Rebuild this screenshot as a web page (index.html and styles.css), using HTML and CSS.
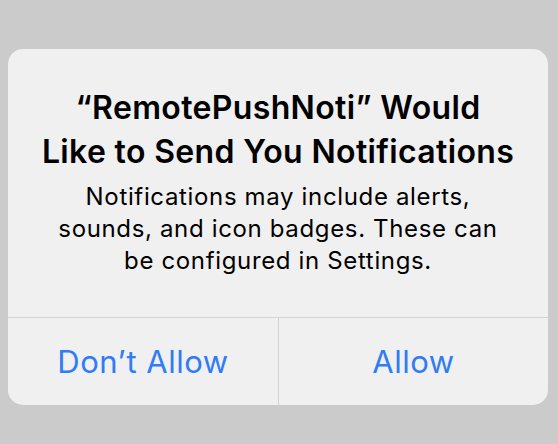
FILE: index.html
```html
<!DOCTYPE html>
<html lang="en">
<head>
<meta charset="utf-8">
<title>Notification permission</title>
<link rel="stylesheet" href="styles.css">
</head>
<body>
<div class="alert">
  <div class="content">
    <h1 class="title">“RemotePushNoti” Would Like to Send You Notifications</h1>
    <p class="message">Notifications may include alerts, sounds, and icon badges. These can be configured in Settings.</p>
  </div>
  <div class="actions">
    <button class="action">Don’t Allow</button>
    <button class="action">Allow</button>
  </div>
</div>
</body>
</html>
```
FILE: styles.css
```css
html, body {
  margin: 0;
  padding: 0;
}
body {
  background: #cbcbcb;
  width: 558px;
  height: 444px;
  padding-top: 49px;
  box-sizing: border-box;
  font-family: Inter, "Open Sans", sans-serif;
}
.alert {
  margin: 0 10px 0 8px;
  width: 540px;
  background: #f0f0f0;
  border-radius: 15px;
  overflow: hidden;
}
.content {
  padding: 37px 32px 40px;
  text-align: center;
}
.title {
  margin: 0;
  font-size: 32px;
  line-height: 44px;
  font-weight: 600;
  letter-spacing: 0.35px;
  color: #000;
}
.message {
  margin: 7px 10px 0;
  font-size: 24px;
  line-height: 32px;
  font-weight: 400;
  letter-spacing: 0.65px;
  color: #000;
}
.actions {
  display: grid;
  grid-template-columns: 1fr 1fr;
  border-top: 1px solid #d3d3d3;
}
.action {
  height: 87px;
  border: 0;
  background: transparent;
  font-family: inherit;
  font-size: 31px;
  letter-spacing: 0.5px;
  color: #2f7cf6;
  padding: 0;
}
.action + .action {
  border-left: 1px solid #d3d3d3;
}
```
